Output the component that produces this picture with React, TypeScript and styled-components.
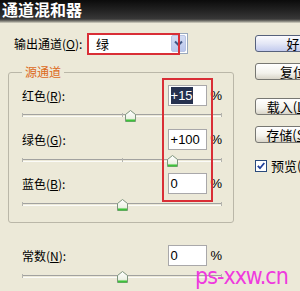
import styled, { createGlobalStyle } from 'styled-components';

const GlobalStyle = createGlobalStyle`
  html, body {
    margin: 0;
    padding: 0;
    background: #ece9d8;
  }
  body {
    width: 300px;
    height: 291px;
    overflow: hidden;
    font-family: "Noto Sans CJK SC", "Liberation Sans", sans-serif;
    font-size: 12px;
    color: #000;
  }
`;

const Window = styled.div`
  position: relative;
  width: 300px;
  height: 291px;
  overflow: hidden;
  background: #ece9d8;
`;

const TitleBar = styled.div`
  height: 23px;
  box-sizing: border-box;
  padding-left: 2px;
  background: linear-gradient(to bottom, #0b0b0b 0px, #262626 12px, #383838 19px, #77766f 21px, #d8d5c6 23px);
  color: #fff;
  font-weight: bold;
  font-size: 16px;
  line-height: 18px;
`;

const Body = styled.div`
  display: flex;
`;

const Left = styled.div`
  width: 245px;
  flex-shrink: 0;
`;

const Right = styled.div`
  display: flex;
  flex-direction: column;
  flex-shrink: 0;
  margin-left: 10px;
  padding-top: 12px;
`;

const ChannelRow = styled.div`
  display: flex;
  align-items: center;
  margin-top: 10px;
  padding-left: 14px;
  height: 21px;
`;

const ChannelLabel = styled.span`
  width: 73px;
  line-height: 14px;
`;

const Select = styled.div`
  display: flex;
  align-items: center;
  width: 101px;
  height: 21px;
  box-sizing: border-box;
  border: 1px solid #9aa9bd;
  background: #fff;
`;

const SelectValue = styled.span`
  flex: 1;
  padding-left: 8px;
  font-size: 13px;
  line-height: 16px;
`;

const SelectArrow = styled.div`
  width: 15px;
  height: 17px;
  margin-right: 1px;
  display: flex;
  align-items: center;
  justify-content: center;
  border-radius: 2px;
  background: linear-gradient(to bottom, #d4dcf2, #b9c6ec);
  border: 1px solid #b8c4e4;
  box-sizing: border-box;
`;

const Group = styled.fieldset`
  margin: 11px 0 0 8px;
  width: 226px;
  box-sizing: border-box;
  padding: 6px 11px 5px 13px;
  border: 1px solid #bab7a8;
  border-radius: 3px;
  min-width: 0;
`;

const Legend = styled.legend`
  padding: 0 3px;
  color: #dd6a1c;
  font-size: 12px;
  line-height: 14px;
`;

const RowHead = styled.div`
  display: flex;
  align-items: center;
  height: 21px;
`;

const Label = styled.span`
  width: 146px;
  line-height: 14px;
`;

const NumBox = styled.div`
  width: 40px;
  height: 21px;
  box-sizing: border-box;
  border: 1px solid #a9a8aa;
  background: #fff;
  display: flex;
  align-items: center;
  padding: 0 2px;
  font-family: "Liberation Sans", Arial, sans-serif;
  font-size: 13px;
`;

const Picked = styled.span`
  background: #26314f;
  color: #fff;
  padding: 1px 0;
  line-height: 15px;
`;

const Percent = styled.span`
  margin-left: 3px;
  font-family: "Liberation Sans", Arial, sans-serif;
  font-size: 13px;
`;

const SliderArea = styled.div<{ $gap: number }>`
  position: relative;
  height: 23px;
  padding-top: ${({ $gap }) => $gap}px;
  box-sizing: border-box;
`;

const Track = styled.div`
  position: relative;
  width: 200px;
  height: 1px;
  border-top: 1px solid #a2a2a0;
  border-bottom: 1px solid #fbfbf8;
`;

const Tick = styled.div<{ $pos: number }>`
  position: absolute;
  left: ${({ $pos }) => $pos}px;
  top: -2px;
  width: 1px;
  height: 4px;
  background: #b4b4ae;
`;

const Thumb = styled.div`
  position: absolute;
  width: 11px;
  height: 12px;
  line-height: 0;
`;

const Constant = styled.div`
  margin-top: 22px;
  padding-left: 22px;
  width: 200px;
`;

const Button = styled.div<{ $primary?: boolean; $gap: number }>`
  width: 76px;
  height: 17px;
  box-sizing: border-box;
  margin-bottom: ${({ $gap }) => $gap}px;
  border: 1px solid ${({ $primary }) => ($primary ? '#56617c' : '#777772')};
  border-radius: 3px;
  background: ${({ $primary }) =>
    $primary
      ? 'linear-gradient(to bottom, #fbfbfe 0%, #e4e7f6 50%, #c3cbee 100%)'
      : 'linear-gradient(to bottom, #ffffff 0%, #f3f2ec 60%, #d9d5c9 100%)'};
  text-align: center;
  font-size: 13px;
  line-height: 15px;
  white-space: nowrap;
`;

const CheckRow = styled.div`
  display: flex;
  align-items: center;
  gap: 4px;
  font-size: 13px;
  line-height: 15px;
  white-space: nowrap;
`;

const CheckBox = styled.div`
  width: 12px;
  height: 12px;
  box-sizing: border-box;
  border: 1px solid #2a4a7c;
  background: #fff;
  display: flex;
  align-items: center;
  justify-content: center;
`;

const Marker = styled.div<{ $x: number; $y: number; $w: number; $h: number }>`
  position: absolute;
  left: ${({ $x }) => $x}px;
  top: ${({ $y }) => $y}px;
  width: ${({ $w }) => $w}px;
  height: ${({ $h }) => $h}px;
  box-sizing: border-box;
  border: 2px solid #d92e36;
  pointer-events: none;
`;

const Watermark = styled.div`
  position: absolute;
  left: 195px;
  top: 263px;
  color: #ef3ade;
  font-family: "DejaVu Sans Condensed", "DejaVu Sans", sans-serif;
  font-size: 23px;
  letter-spacing: -1px;
  line-height: 26px;
`;

const Slider = ({ value, gap }: { value: number; gap: number }) => (
  <SliderArea $gap={gap}>
    <Track>
      <Tick $pos={0} />
      <Tick $pos={100} />
      <Tick $pos={199} />
      <Thumb style={{ left: 100 + value / 2 - 5, top: -5 }}>
        <svg width="11" height="12" viewBox="0 0 11 12">
          <defs>
            <linearGradient id="thumbFill" x1="0" y1="0" x2="0" y2="1">
              <stop offset="0" stopColor="#ffffff" />
              <stop offset="0.7" stopColor="#eef2e6" />
              <stop offset="1" stopColor="#b6e0a8" />
            </linearGradient>
          </defs>
          <path d="M0.5 11.5V4.5L5.5 0.5L10.5 4.5V11.5Z" fill="url(#thumbFill)" stroke="#7e957e" />
          <path d="M1 10.5H10" stroke="#3ec23a" strokeWidth="2" />
        </svg>
      </Thumb>
    </Track>
  </SliderArea>
);

type RowProps = { label: string; mnemonic: string; value: number; text: string; picked?: boolean; gap: number };

const SourceRow = ({ label, mnemonic, value, text, picked, gap }: RowProps) => (
  <div>
    <RowHead>
      <Label>
        {label}(<u>{mnemonic}</u>):
      </Label>
      <NumBox>{picked ? <Picked>{text}</Picked> : text}</NumBox>
      <Percent>%</Percent>
    </RowHead>
    <Slider value={value} gap={gap} />
  </div>
);

const App = () => {
  return (
    <Window>
      <GlobalStyle />
      <TitleBar>通道混和器</TitleBar>
      <Body>
        <Left>
          <ChannelRow>
            <ChannelLabel>
              输出通道(<u>O</u>):
            </ChannelLabel>
            <Select>
              <SelectValue>绿</SelectValue>
              <SelectArrow>
                <svg width="9" height="7" viewBox="0 0 9 7">
                  <path d="M1 1.5L4.5 5L8 1.5" fill="none" stroke="#3f5583" strokeWidth="2" />
                </svg>
              </SelectArrow>
            </Select>
          </ChannelRow>
          <Group>
            <Legend>源通道</Legend>
            <SourceRow label="红色" mnemonic="R" value={15} text="+15" picked gap={8} />
            <SourceRow label="绿色" mnemonic="G" value={100} text="+100" gap={9} />
            <SourceRow label="蓝色" mnemonic="B" value={0} text="0" gap={9} />
          </Group>
          <Constant>
            <SourceRow label="常数" mnemonic="N" value={0} text="0" gap={9} />
          </Constant>
        </Left>
        <Right>
          <Button $primary $gap={11}>好</Button>
          <Button $gap={18}>复位</Button>
          <Button $gap={11}>载入(<u>L</u>)...</Button>
          <Button $gap={15}>存储(<u>S</u>)...</Button>
          <CheckRow>
            <CheckBox>
              <svg width="8" height="8" viewBox="0 0 8 8">
                <path d="M0.8 3.8L3 6.2L7.3 1" fill="none" stroke="#1f3f9a" strokeWidth="1.8" />
              </svg>
            </CheckBox>
            预览(<u>P</u>)
          </CheckRow>
        </Right>
      </Body>
      <Marker $x={87} $y={33} $w={93} $h={22} />
      <Marker $x={162} $y={78} $w={51} $h={124} />
      <Watermark>ps-xxw.cn</Watermark>
    </Window>
  );
};

export default App;
